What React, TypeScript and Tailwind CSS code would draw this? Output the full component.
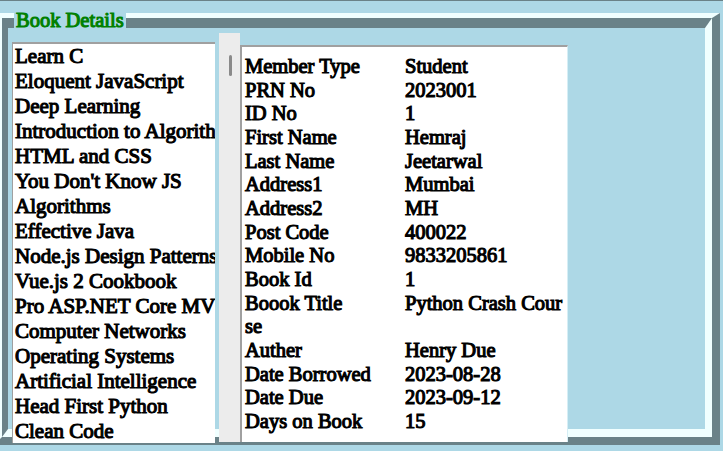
import React from 'react';

const books = [
  'Learn C',
  'Eloquent JavaScript',
  'Deep Learning',
  'Introduction to Algorithms',
  'HTML and CSS',
  "You Don't Know JS",
  'Algorithms',
  'Effective Java',
  'Node.js Design Patterns',
  'Vue.js 2 Cookbook',
  'Pro ASP.NET Core MVC',
  'Computer Networks',
  'Operating Systems',
  'Artificial Intelligence',
  'Head First Python',
  'Clean Code',
];

const details: [string, string][] = [
  ['Member Type', 'Student'],
  ['PRN No', '2023001'],
  ['ID No', '1'],
  ['First Name', 'Hemraj'],
  ['Last Name', 'Jeetarwal'],
  ['Address1', 'Mumbai'],
  ['Address2', 'MH'],
  ['Post Code', '400022'],
  ['Mobile No', '9833205861'],
  ['Book Id', '1'],
  ['Boook Title', 'Python Crash Course'],
  ['Auther', 'Henry Due'],
  ['Date Borrowed', '2023-08-28'],
  ['Date Due', '2023-09-12'],
  ['Days on Book', '15'],
];

const App: React.FC = () => {
  return (
    <div className="w-[723px] h-[451px] overflow-hidden bg-[#add8e6] border-t border-[#6a8288] font-['Liberation_Serif',serif] font-normal text-black">
      {/* ridge border, outer layer */}
      <div className="relative mt-[12px] -ml-[6px] w-[726px] h-[432px] border-t-[5px] border-l-[8px] border-r-[8px] border-b-[8px] border-t-[#f0ffff] border-l-[#f0ffff] border-r-[#6a8288] border-b-[#6a8288]">
        <div className="absolute left-[12px] -top-[9px] px-[2px] bg-[#add8e6] text-[20.5px] leading-[23px] text-[#008000] [-webkit-text-stroke:1.1px_#008000]">
          Book Details
        </div>
        {/* ridge border, inner layer */}
        <div className="h-full border-t-[10px] border-l-[6px] border-r-[7px] border-b-[8px] border-t-[#6a8288] border-l-[#6a8288] border-r-[#f0ffff] border-b-[#f0ffff]">
          <div className="flex items-start pl-[4px] pt-[5px]">
            <div className="mt-[9px] w-[203px] h-[401px] shrink-0 overflow-hidden bg-white border-t-2 border-l border-[#a0a0a0] pl-[2px] text-[21px] leading-[25px] whitespace-nowrap [-webkit-text-stroke:1.1px_#000]">
              {books.map((b) => (
                <div key={b}>{b}</div>
              ))}
            </div>
            <div className="ml-[4px] w-[21px] h-[409px] shrink-0 bg-[#ececec] pt-[22px] pl-[10px]">
              <div className="w-[3px] h-[21px] rounded-full bg-[#8a8a8a]" />
            </div>
            <div className="mt-[12px] w-[328px] h-[397px] shrink-0 bg-white border-t-2 border-l-2 border-[#a0a0a0] border-r border-r-[#d6eef5] pl-[3px] pt-[8px] pr-[3px] text-[20.5px] leading-[23.67px] break-all [-webkit-text-stroke:1.1px_#000]">
              {details.map(([k, v]) => (
                <div key={k}>
                  <span className="inline-block w-[160px] break-normal">{k}</span>
                  {v}
                </div>
              ))}
            </div>
          </div>
        </div>
      </div>
    </div>
  );
};

export default App;
